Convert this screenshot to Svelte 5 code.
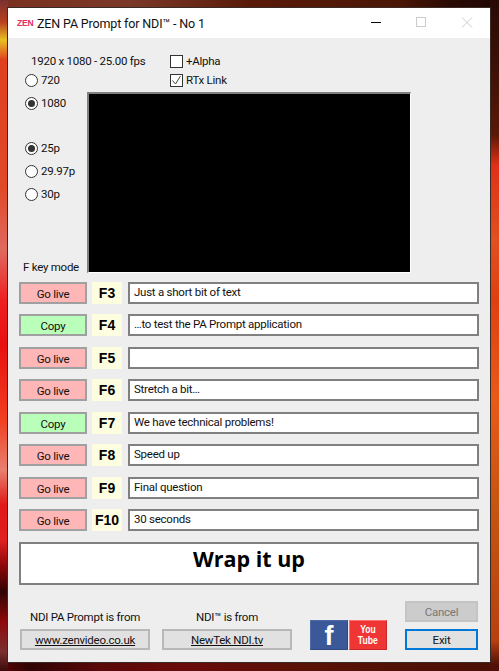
<script>
  const rows = [
    { action: 'Go live', key: 'F3', text: 'Just a short bit of text' },
    { action: 'Copy', key: 'F4', text: '…to test the PA Prompt application' },
    { action: 'Go live', key: 'F5', text: '' },
    { action: 'Go live', key: 'F6', text: 'Stretch a bit…' },
    { action: 'Copy', key: 'F7', text: 'We have technical problems!' },
    { action: 'Go live', key: 'F8', text: 'Speed up' },
    { action: 'Go live', key: 'F9', text: 'Final question' },
    { action: 'Go live', key: 'F10', text: '30 seconds' }
  ];
</script>

<div class="desktop">
  <div class="window">
    <header class="titlebar">
      <span class="logo">ZEN</span>
      <span class="title">ZEN PA Prompt for NDI™ - No 1</span>
      <div class="controls">
        <svg width="46" height="30" viewBox="0 0 46 30"><path d="M19 14.5h10" stroke="#000" fill="none"/></svg>
        <svg width="46" height="30" viewBox="0 0 46 30"><rect x="18.5" y="9.5" width="9" height="9" stroke="#ccc" fill="none"/></svg>
        <svg width="46" height="30" viewBox="0 0 46 30"><path d="M18 9.5l10 10M28 9.5l-10 10" stroke="#ccc" fill="none"/></svg>
      </div>
    </header>

    <main class="client">
      <section class="top">
        <div class="left">
          <div class="format">1920 x 1080 - 25.00 fps</div>
          <div class="radios res">
            <label class="radio"><span class="dot"></span>720</label>
            <label class="radio"><span class="dot on"></span>1080</label>
          </div>
          <div class="radios fps">
            <label class="radio"><span class="dot on"></span>25p</label>
            <label class="radio"><span class="dot"></span>29.97p</label>
            <label class="radio"><span class="dot"></span>30p</label>
          </div>
          <div class="fmode">F key mode</div>
        </div>
        <div class="right">
          <div class="checks">
            <label class="check"><span class="box"></span>+Alpha</label>
            <label class="check"><span class="box">
              <svg width="11" height="11" viewBox="0 0 11 11"><path d="M1.5 5.5l3 3.5 5-8" stroke="#444" fill="none"/></svg>
            </span>RTx Link</label>
          </div>
          <div class="preview"></div>
        </div>
      </section>

      <section class="rows">
        {#each rows as r}
          <div class="row">
            <button class="act" class:copy={r.action === 'Copy'}>{r.action}</button>
            <span class="fkey">{r.key}</span>
            <div class="field">{r.text}</div>
          </div>
        {/each}
      </section>

      <div class="big">Wrap it up</div>

      <footer class="foot">
        <div class="link">
          <div class="cap">NDI PA Prompt is from</div>
          <button class="btn web">www.zenvideo.co.uk</button>
        </div>
        <div class="link">
          <div class="cap">NDI™ is from</div>
          <button class="btn web">NewTek NDI.tv</button>
        </div>
        <div class="social">
          <div class="fb">f</div>
          <div class="yt"><span>You</span><span>Tube</span></div>
        </div>
        <div class="actions">
          <button class="btn cancel">Cancel</button>
          <button class="btn exit">Exit</button>
        </div>
      </footer>
    </main>
  </div>
</div>

<style>
  :global(body) { margin: 0; }
  .desktop {
    width: 499px; height: 671px; box-sizing: border-box; padding: 7px 8px 8px 7px; overflow: hidden;
    background-repeat: no-repeat;
    background-image:
      linear-gradient(#7a3030 0, #b84020 22px, #e8c020 40px, #e04020 60px, #e04a28 190px, #e06a60 250px, #ee2020 300px, #e81010 345px, #f04020 420px, #e88070 470px, #e01818 505px, #e02020 540px, #900808 565px, #300404 592px, #900a0a 622px, #7a3030 652px, #3a0a0a 671px),
      linear-gradient(#2a0a04 0, #3a1006 60px, #5a1808 135px, #e03018 165px, #e05020 240px, #e04010 300px, #e85a18 400px, #c85510 500px, #b84010 640px, #501008 665px),
      linear-gradient(to right, #7a3020 0, #7a3828 130px, #5a1a0a 250px, #4a1606 400px, #2a0a04 450px, #200804 499px),
      linear-gradient(to right, #5a0505 0, #300404 30px, #5a0808 100px, #6a0a0a 180px, #5a1206 300px, #4a1005 499px);
    background-size: 8px 100%, 9px 100%, 100% 8px, 100% 9px;
    background-position: left top, right top, left top, left bottom;
    background-color: #4a1208;
    font-family: Roboto, "Open Sans", sans-serif;
    font-size: 11.5px; letter-spacing: -0.25px; color: #111;
  }
  .window {
    width: 484px; height: 656px; box-sizing: border-box; border: 1px solid #3a2a25; background: #eee;
    display: flex; flex-direction: column;
  }
  .titlebar { height: 30px; background: #fff; display: flex; align-items: center; flex: none; }
  .logo { margin-left: 9px; width: 20px; font: bold 8.5px/1 "Liberation Sans", sans-serif; color: #e0305e; letter-spacing: -0.2px; }
  .title { font-size: 12.5px; letter-spacing: -0.15px; color: #111; }
  .controls { margin-left: auto; display: flex; }
  .client { flex: 1; padding: 0 11px 0 11px; display: flex; flex-direction: column; }
  .top { display: flex; height: 237px; }
  .left { width: 70px; flex: none; }
  .format { padding: 15px 0 0 12px; white-space: nowrap; height: 17px; line-height: 17px; width: 140px; }
  .radios { display: flex; flex-direction: column; padding-left: 6px; }
  .res { gap: 7px; margin-top: 2px; }
  .fps { gap: 7px; margin-top: 29px; }
  .radio { display: flex; align-items: center; height: 16px; gap: 3px; }
  .dot { width: 11px; height: 11px; border: 1px solid #333; border-radius: 50%; background: #fff; display: block; position: relative; }
  .dot.on::after { content: ""; position: absolute; left: 2px; top: 2px; width: 7px; height: 7px; border-radius: 50%; background: #333; }
  .fmode { margin-top: 58px; padding-left: 4px; white-space: nowrap; }
  .right { flex: 1; display: flex; flex-direction: column; align-items: flex-start; }
  .checks { display: flex; flex-direction: column; gap: 5px; margin-left: 81px; padding-top: 16px; }
  .check { display: flex; align-items: center; height: 14px; gap: 3px; }
  .box { width: 11px; height: 11px; border: 1px solid #333; background: #fff; display: block; line-height: 0; }
  .preview { width: 321px; height: 178px; background: #000; margin-top: 5px; border-top: 2px solid #808080; border-left: 2px solid #808080; border-right: 1px solid #fff; border-bottom: 1px solid #fff; margin-left: -2px; }
  .rows { display: flex; flex-direction: column; gap: 10.43px; margin-top: 7px; }
  .row { display: flex; height: 22px; }
  button { font: inherit; color: inherit; letter-spacing: inherit; margin: 0; padding: 0; }
  .act { width: 68px; height: 22px; box-sizing: border-box; border: 2px solid #a0a0a0; background: #ffb6b6; padding-top: 2px; }
  .act.copy { background: #b9ffb9; }
  .fkey { width: 30px; margin-left: 5px; background: #fdfde0; font: bold 14px/22px "Liberation Sans", sans-serif; letter-spacing: 0; text-align: center; color: #000; }
  .field { margin-left: 6px; flex: 1; box-sizing: border-box; border: 2px solid #808080; background: #fff; padding-left: 4px; line-height: 16px; }
  .big { margin-top: 11px; height: 43px; box-sizing: border-box; border: 2px solid #808080; background: #fff; font: bold 21.5px/30px "Open Sans", sans-serif; letter-spacing: 0; text-align: center; color: #000; }
  .foot { display: flex; flex: 1; align-items: flex-end; padding-bottom: 12px; }
  .link { width: 130px; margin-left: 1px; margin-right: 11px; text-align: center; }
  .cap { margin-bottom: 3px; line-height: 17px; }
  .btn { display: block; box-sizing: border-box; height: 21px; border: 2px solid #b8b8b8; background: #e1e1e1; }
  .web { width: 130px; text-decoration: underline; }
  .social { display: flex; gap: 1px; margin-left: 7px; }
  .fb, .yt { width: 38px; height: 30px; box-sizing: border-box; color: #fff; letter-spacing: 0; }
  .fb { background: #3b5998; font: bold 27px/30px "Liberation Sans", sans-serif; text-align: center; border: 1px solid; border-color: #4c6aa8 #2f4a80 #2f4a80 #4c6aa8; }
  .yt { background: #f03535; font: bold 11px/11px "Liberation Sans", sans-serif; display: flex; flex-direction: column; align-items: center; justify-content: center; border: 1px solid; border-color: #f87070 #c82828 #c82828 #f87070; }
  .yt span { display: block; transform: scaleX(0.78); }
  .actions { margin-left: auto; margin-right: 1px; display: flex; flex-direction: column; gap: 7px; width: 73px; }
  .actions .btn { width: 73px; }
  .cancel { background: #ccc; border-color: #c4c4c4; color: #777; }
  .exit { border-color: #0078d7; }
</style>
